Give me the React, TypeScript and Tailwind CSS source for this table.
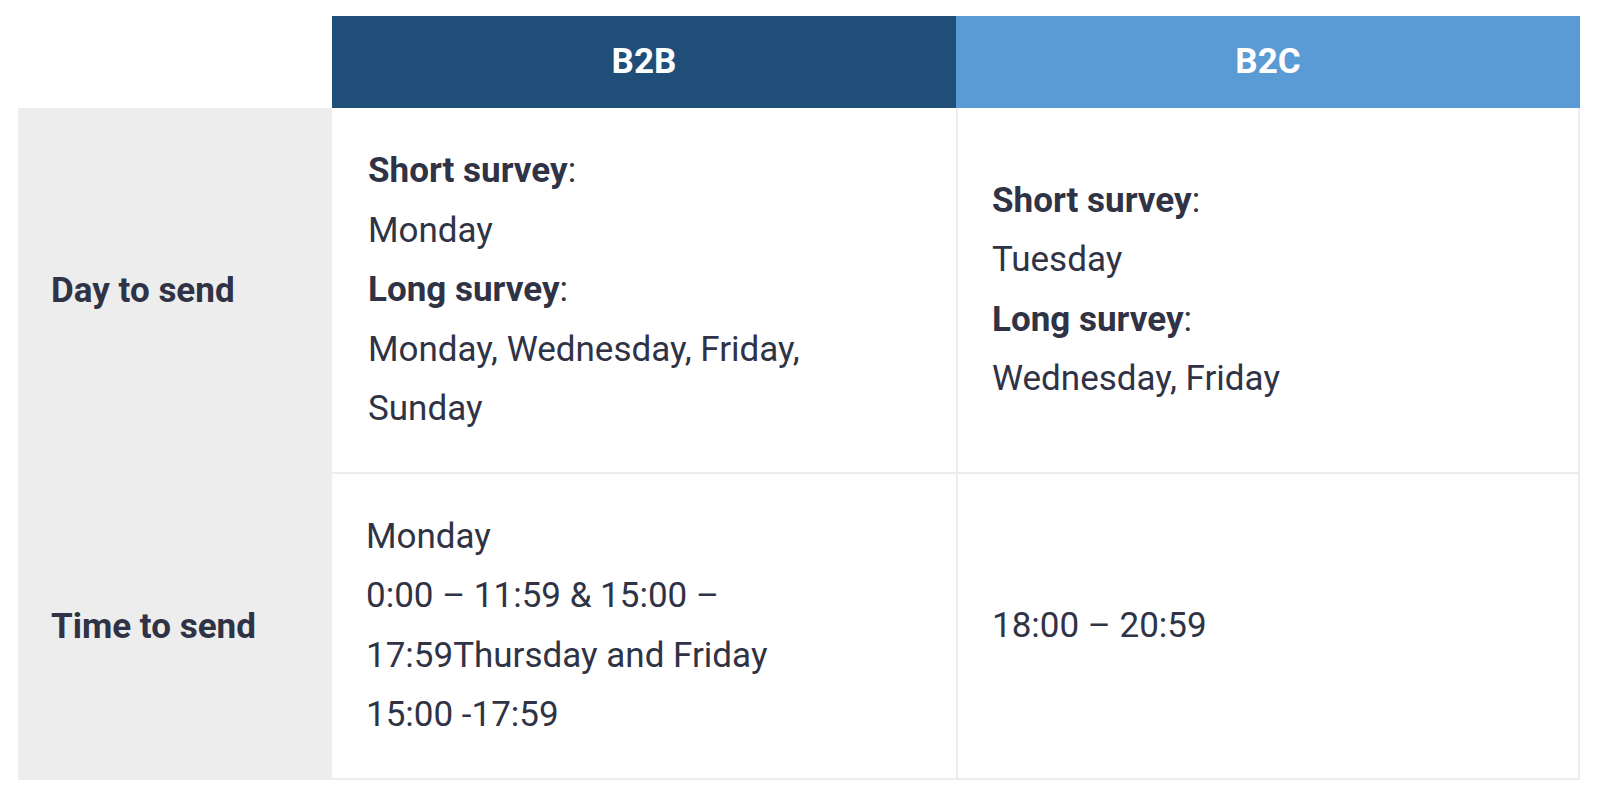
const rows = [
  {
    label: "Day to send",
    b2b: (
      <>
        <p>
          <strong className="font-bold">Short survey</strong>:
        </p>
        <p>Monday</p>
        <p>
          <strong className="font-bold">Long survey</strong>:
        </p>
        <p>Monday, Wednesday, Friday, Sunday</p>
      </>
    ),
    b2c: (
      <>
        <p>
          <strong className="font-bold">Short survey</strong>:
        </p>
        <p>Tuesday</p>
        <p>
          <strong className="font-bold">Long survey</strong>:
        </p>
        <p>Wednesday, Friday</p>
      </>
    ),
    b2bPad: "pl-[36px]",
  },
  {
    label: "Time to send",
    b2b: (
      <>
        <p>Monday</p>
        <p>0:00 – 11:59 &amp; 15:00 – 17:59Thursday and Friday</p>
        <p>15:00 -17:59</p>
      </>
    ),
    b2c: <p>18:00 – 20:59</p>,
    b2bPad: "pl-[34px]",
  },
]

export default function App() {
  return (
    <div
      className="min-h-screen bg-white pt-[16px] pl-[18px] text-[35px] leading-[1.7] text-[#2f3345]"
      style={{ fontFamily: "Roboto, 'Liberation Sans', sans-serif" }}
    >
      <div className="grid w-[1562px] grid-cols-[314px_624px_624px]">
        {/* header */}
        <div className="h-[92px]"></div>
        <div className="flex h-[92px] items-center justify-center bg-[#1f4e79] font-bold text-white">B2B</div>
        <div className="flex h-[92px] items-center justify-center bg-[#5b9bd5] font-bold text-white">B2C</div>

        {rows.map((row) => (
          <div key={row.label} className="contents">
            <div className="flex items-center bg-[#ededed] px-[33px] font-bold">{row.label}</div>
            <div className={`flex flex-col justify-center border-b-2 border-[#ececec] py-[33px] pr-[80px] ${row.b2bPad}`}>
              {row.b2b}
            </div>
            <div className="flex flex-col justify-center border-x-2 border-b-2 border-[#ececec] py-[33px] pr-[34px] pl-[34px]">
              {row.b2c}
            </div>
          </div>
        ))}
      </div>
    </div>
  )
}
